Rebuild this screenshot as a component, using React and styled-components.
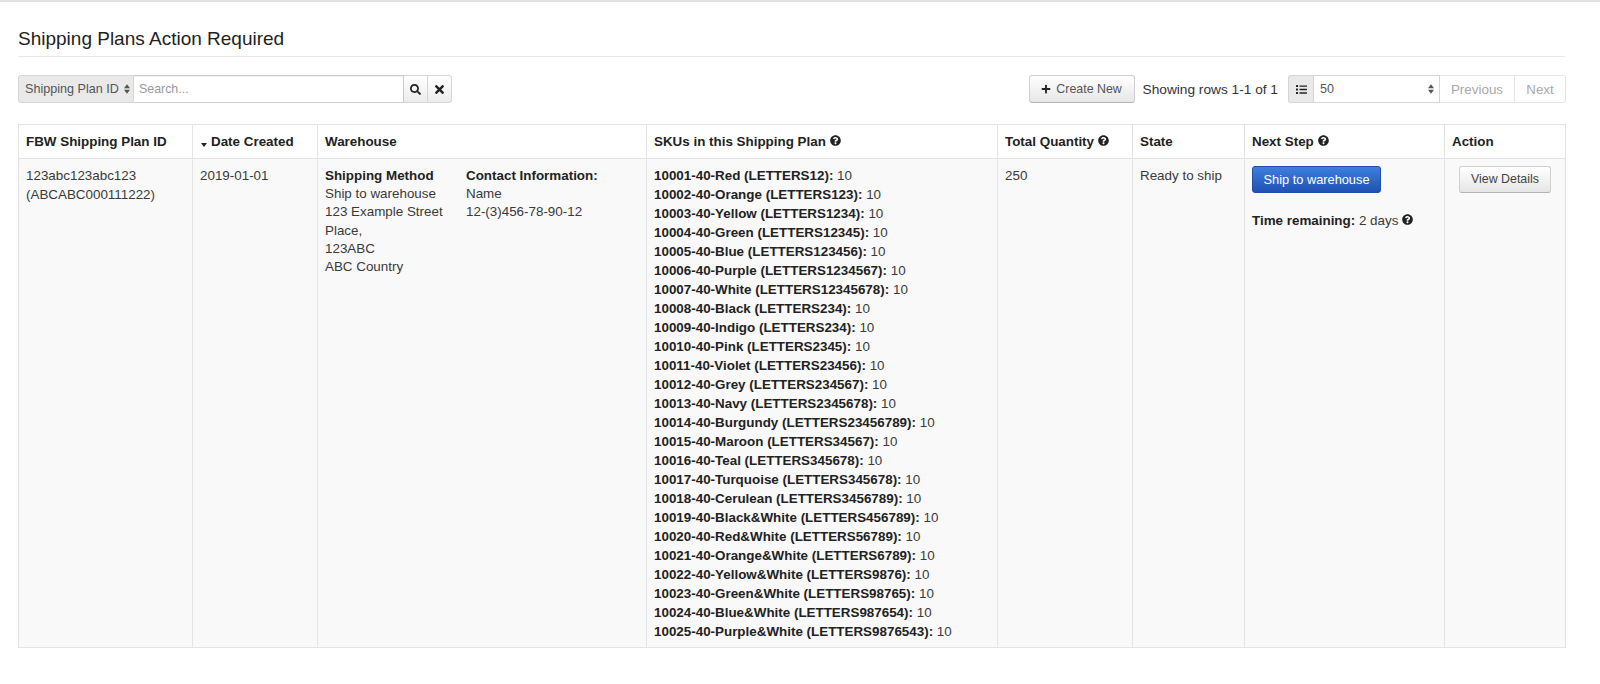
import React from "react";
import styled, { createGlobalStyle } from "styled-components";
import { FaSearch, FaTimes, FaPlus, FaQuestionCircle, FaList } from "react-icons/fa";

const GlobalStyle = createGlobalStyle`
 html, body {
  margin: 0;
  background: #fff;
  color: #3a3a3a;
  font-family: "Liberation Sans", Arial, sans-serif;
  font-size: 13.4px;
  line-height: 19px;
 }
`;
const Page = styled.div`
 min-height: 684px;
 box-sizing: border-box;
 border-top: 2px solid #e2e2e2;
 padding: 0 35px 0 18px;
`;
const Title = styled.h1`
 margin: 0;
 height: 55px;
 box-sizing: border-box;
 padding-top: 25px;
 border-bottom: 1px solid #e8e8e8;
 font-size: 19px;
 line-height: 24px;
 font-weight: 400;
 color: #222;
`;
const Toolbar = styled.div`
 display: flex;
 justify-content: space-between;
 align-items: center;
 margin: 18px -1px 21px 0;
 height: 28px;
`;
const SearchGroup = styled.div`
 display: flex;
 height: 28px;
 width: 434px;
`;
const SelectBox = styled.div`
 display: flex;
 align-items: center;
 justify-content: space-between;
 box-sizing: border-box;
 flex: ${(p) => (p.$wide ? "0 0 127px" : "0 0 116px")};
 padding: 0 ${(p) => (p.$wide ? "5px" : "3px")} 0 6px;
 background: ${(p) => (p.$wide ? "#fff" : "#e9e9e9")};
 border: 1px solid #d6d6d6;
 border-radius: ${(p) => (p.$wide ? "0" : "3px 0 0 3px")};
 font-size: 12.6px;
 color: #555;
 white-space: nowrap;
`;
const Arrows = styled.svg`
 width: 6px;
 height: 10px;
 fill: #555;
`;
const SearchInput = styled.div`
 flex: 1;
 display: flex;
 align-items: center;
 padding-left: 5px;
 border: 1px solid #ccc;
 border-left: none;
 font-size: 12.4px;
 color: #999;
 box-shadow: inset 0 1px 1px rgba(0, 0, 0, 0.06);
`;
const IconButton = styled.div`
 display: flex;
 align-items: center;
 justify-content: center;
 width: 23px;
 border: 1px solid #d6d6d6;
 border-left: none;
 background: linear-gradient(#fff, #ececec);
 color: #222;
 font-size: 11px;
 &:last-child {
  border-radius: 0 3px 3px 0;
  font-size: 13px;
 }
`;
const RightTools = styled.div`
 display: flex;
 align-items: center;
 height: 28px;
`;
const Button = styled.div`
 display: inline-flex;
 align-items: center;
 justify-content: center;
 gap: 5px;
 box-sizing: border-box;
 height: 28px;
 padding: 0;
 border: 1px solid #d0d0d0;
 border-bottom-color: #b3b3b3;
 border-radius: 3px;
 background: linear-gradient(#fff, #e6e6e6);
 font-size: 12.4px;
 color: #444;
 white-space: nowrap;
`;
const CreateButton = styled(Button)`
 width: 106px;
 color: #555;
`;
const PrimaryButton = styled(Button)`
 width: 129px;
 height: 27px;
 border-color: #1f4fa8;
 background: linear-gradient(#3f7fdc, #1f51b4);
 font-size: 12.8px;
 color: #fff;
`;
const ViewButton = styled(Button)`
 width: 92px;
 height: 27px;
`;
const RowsLabel = styled.span`
 margin: 0 10px 0 8px;
 font-size: 13.7px;
 color: #333;
`;
const ListAddon = styled.div`
 display: flex;
 align-items: center;
 justify-content: center;
 box-sizing: border-box;
 width: 25px;
 height: 28px;
 border: 1px solid #d6d6d6;
 border-right: none;
 border-radius: 3px 0 0 3px;
 background: #e9e9e9;
 color: #222;
 font-size: 11px;
`;
const PageSelect = styled(SelectBox)`
 height: 28px;
`;
const PagerButton = styled.div`
 display: flex;
 align-items: center;
 justify-content: center;
 box-sizing: border-box;
 width: ${(p) => p.$width}px;
 height: 28px;
 border: 1px solid #e6e6e6;
 border-left: none;
 font-size: 13.4px;
 color: #a8a8a8;
 &:last-child {
  border-radius: 0 3px 3px 0;
 }
`;
const Table = styled.table`
 width: 1547px;
 table-layout: fixed;
 border-collapse: collapse;
 border: 1px solid #e4e4e4;
`;
const Th = styled.th`
 height: 34px;
 box-sizing: border-box;
 padding: 0 7px;
 border: 1px solid #e4e4e4;
 background: #fff;
 text-align: left;
 font-weight: 700;
 color: #222;
 white-space: nowrap;
`;
const Td = styled.td`
 padding: 7px 7px 6px;
 border: 1px solid #e4e4e4;
 background: #f9f9f9;
 vertical-align: top;
`;
const CenterCell = styled(Td)`
 text-align: center;
`;
const Help = styled(FaQuestionCircle)`
 margin-left: 4px;
 font-size: 11px;
 color: #222;
 vertical-align: 0;
`;
const SortCaret = styled.span`
 display: inline-block;
 margin: 0 4px 0 1px;
 border-left: 3.5px solid transparent;
 border-right: 3.5px solid transparent;
 border-top: 4px solid #222;
 vertical-align: -1px;
`;
const WarehouseGrid = styled.div`
 display: grid;
 grid-template-columns: 133px 1fr;
 gap: 8px;
 margin-top: 1px;
 line-height: 18.2px;
`;
const Line = styled.div``;
const Bold = styled.b`
 color: #222;
`;
const NextStepNote = styled.div`
 margin-top: 18px;
`;

const columns = [174, 125, 329, 351, 135, 112, 200, 121];

const skus = [
 ["10001-40-Red", "LETTERS12"],
 ["10002-40-Orange", "LETTERS123"],
 ["10003-40-Yellow", "LETTERS1234"],
 ["10004-40-Green", "LETTERS12345"],
 ["10005-40-Blue", "LETTERS123456"],
 ["10006-40-Purple", "LETTERS1234567"],
 ["10007-40-White", "LETTERS12345678"],
 ["10008-40-Black", "LETTERS234"],
 ["10009-40-Indigo", "LETTERS234"],
 ["10010-40-Pink", "LETTERS2345"],
 ["10011-40-Violet", "LETTERS23456"],
 ["10012-40-Grey", "LETTERS234567"],
 ["10013-40-Navy", "LETTERS2345678"],
 ["10014-40-Burgundy", "LETTERS23456789"],
 ["10015-40-Maroon", "LETTERS34567"],
 ["10016-40-Teal", "LETTERS345678"],
 ["10017-40-Turquoise", "LETTERS345678"],
 ["10018-40-Cerulean", "LETTERS3456789"],
 ["10019-40-Black&White", "LETTERS456789"],
 ["10020-40-Red&White", "LETTERS56789"],
 ["10021-40-Orange&White", "LETTERS6789"],
 ["10022-40-Yellow&White", "LETTERS9876"],
 ["10023-40-Green&White", "LETTERS98765"],
 ["10024-40-Blue&White", "LETTERS987654"],
 ["10025-40-Purple&White", "LETTERS9876543"],
];

function UpDown() {
 return (
  <Arrows viewBox="0 0 7 11">
   <path d="M3.5 0 7 4.5H0zM3.5 11 0 6.5h7z" />
  </Arrows>
 );
}

export default function App() {
 return (
  <Page>
   <GlobalStyle />
   <Title>Shipping Plans Action Required</Title>
   <Toolbar>
    <SearchGroup>
     <SelectBox>
      Shipping Plan ID
      <UpDown />
     </SelectBox>
     <SearchInput>Search...</SearchInput>
     <IconButton>
      <FaSearch />
     </IconButton>
     <IconButton>
      <FaTimes />
     </IconButton>
    </SearchGroup>
    <RightTools>
     <CreateButton>
      <FaPlus size={10} color="#222" />
      Create New
     </CreateButton>
     <RowsLabel>Showing rows 1-1 of 1</RowsLabel>
     <ListAddon>
      <FaList />
     </ListAddon>
     <PageSelect $wide>
      50
      <UpDown />
     </PageSelect>
     <PagerButton $width={75}>Previous</PagerButton>
     <PagerButton $width={51}>Next</PagerButton>
    </RightTools>
   </Toolbar>
   <Table>
    <colgroup>
     {columns.map((w, i) => (
      <col key={i} style={{ width: w }} />
     ))}
    </colgroup>
    <thead>
     <tr>
      <Th>FBW Shipping Plan ID</Th>
      <Th>
       <SortCaret />
       Date Created
      </Th>
      <Th>Warehouse</Th>
      <Th>
       SKUs in this Shipping Plan
       <Help />
      </Th>
      <Th>
       Total Quantity
       <Help />
      </Th>
      <Th>State</Th>
      <Th>
       Next Step
       <Help />
      </Th>
      <Th>Action</Th>
     </tr>
    </thead>
    <tbody>
     <tr>
      <Td>
       123abc123abc123
       <br />
       (ABCABC000111222)
      </Td>
      <Td>2019-01-01</Td>
      <Td>
       <WarehouseGrid>
        <div>
         <Line>
          <Bold>Shipping Method</Bold>
         </Line>
         <Line>Ship to warehouse</Line>
         <Line>123 Example Street</Line>
         <Line>Place,</Line>
         <Line>123ABC</Line>
         <Line>ABC Country</Line>
        </div>
        <div>
         <Line>
          <Bold>Contact Information:</Bold>
         </Line>
         <Line>Name</Line>
         <Line>12-(3)456-78-90-12</Line>
        </div>
       </WarehouseGrid>
      </Td>
      <Td>
       {skus.map(([sku, code]) => (
        <Line key={sku}>
         <Bold>
          {sku} ({code}):
         </Bold>{" "}
         10
        </Line>
       ))}
      </Td>
      <Td>250</Td>
      <Td>Ready to ship</Td>
      <Td>
       <PrimaryButton>Ship to warehouse</PrimaryButton>
       <NextStepNote>
        <Bold>Time remaining:</Bold> 2 days
        <Help />
       </NextStepNote>
      </Td>
      <CenterCell>
       <ViewButton>View Details</ViewButton>
      </CenterCell>
     </tr>
    </tbody>
   </Table>
  </Page>
 );
}
